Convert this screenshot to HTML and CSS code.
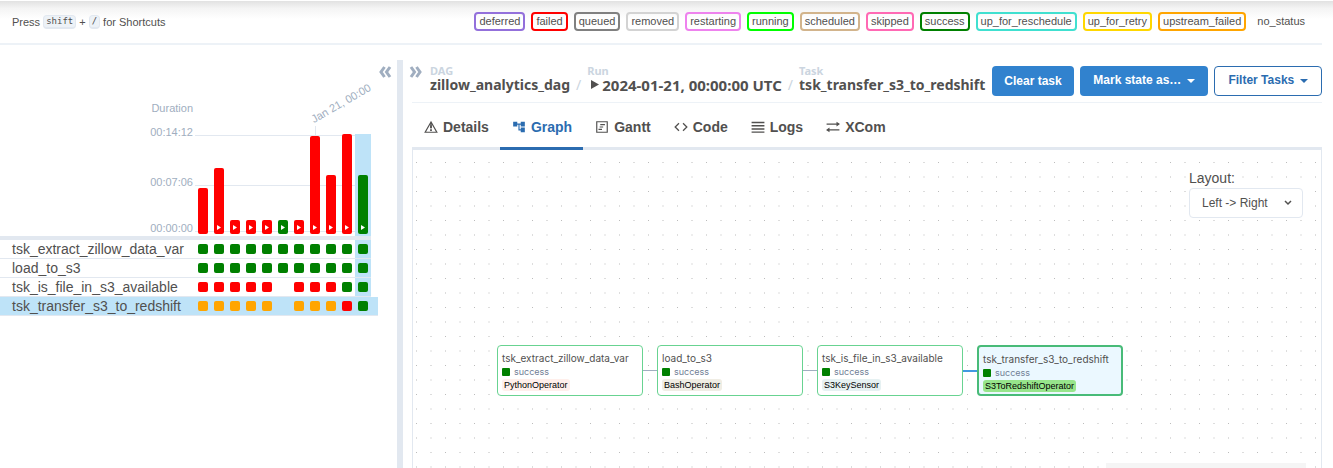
FILE: index.html
```
<!DOCTYPE html>
<html lang="en">
<head>
<meta charset="utf-8">
<title>zillow_analytics_dag</title>
<link rel="stylesheet" href="styles.css">
</head>
<body>
<header class="topbar">
  <p class="shortcuts">Press <kbd>shift</kbd> + <kbd>/</kbd> for Shortcuts</p>
  <ul class="legend">
    <li class="deferred">deferred</li><li class="failed">failed</li><li class="queued">queued</li><li class="removed">removed</li><li class="restarting">restarting</li><li class="running">running</li><li class="scheduled">scheduled</li><li class="skipped">skipped</li><li class="success">success</li><li class="reschedule">up_for_reschedule</li><li class="retry">up_for_retry</li><li class="upstream">upstream_failed</li><li class="none">no_status</li>
  </ul>
</header>
<main class="main">
  <section class="grid-panel">
    <div class="grid-top">
      <button class="collapse" aria-label="Hide grid"><svg width="14" height="14" viewBox="0 0 14 14"><path d="M6.500 2L3 7L6.500 12M12 2L8.500 7L12 12"/></svg></button>
    </div>
    <div class="chart">
      <div class="axis"><span>Duration</span><span>00:14:12</span><span>00:07:06</span><span>00:00:00</span></div>
      <div class="plot">
        <i class="line line-top"></i><i class="line line-mid"></i><i class="line line-low"></i><i class="tick"></i><span class="date">Jan 21, 00:00</span>
        <div class="bars" id="bars"></div>
      </div>
    </div>
    <div class="tasks" id="tasks"></div>
  </section>
  <div class="divider"></div>
  <section class="detail">
    <div class="crumb-row">
      <button class="expand" aria-label="Hide details"><svg width="14" height="14" viewBox="0 0 14 14"><path d="M2 2L5.500 7L2 12M7.500 2L11 7L7.500 12"/></svg></button>
      <nav class="crumbs">
        <a href="#dag"><small>DAG</small><b>zillow_analytics_dag</b></a>
        <i>/</i>
        <a href="#run"><small>Run</small><b class="run"><svg width="8" height="10" viewBox="0 0 8 10"><path d="M0 0L8 4.500L0 9Z"/></svg>2024-01-21, 00:00:00 UTC</b></a>
        <i>/</i>
        <a href="#task"><small>Task</small><b>tsk_transfer_s3_to_redshift</b></a>
      </nav>
      <div class="actions">
        <button class="btn clear">Clear task</button>
        <button class="btn mark">Mark state as… <span class="caret"></span></button>
        <button class="btn filter">Filter Tasks <span class="caret"></span></button>
      </div>
    </div>
    <div class="tabs" role="tablist">
      <button role="tab"><svg viewBox="0 0 24 24"><path fill="none" stroke="currentColor" stroke-width="2" d="M12 3.500L2 21H22ZM12 3v11"/><path d="M10.500 9h3v5h-3zM10.500 16h3v3h-3z"/></svg>Details</button>
      <button role="tab" aria-selected="true" class="active"><svg viewBox="0 0 24 24"><path d="M22 11V3h-7v3H9V3H2v8h7V8h2v10h4v3h7v-8h-7v3h-2V8h2v3z"/></svg>Graph</button>
      <button role="tab"><svg viewBox="0 0 24 24"><path fill="none" stroke="currentColor" stroke-width="2" d="M3 3h18v18H3zM9 8h8M8 12h6M6 16h6"/></svg>Gantt</button>
      <button role="tab"><svg viewBox="0 0 24 24"><path fill="none" stroke="currentColor" stroke-width="2.200" d="M8.500 5.500L2 12l6.500 6.500M15.500 5.500L22 12l-6.500 6.500"/></svg>Code</button>
      <button role="tab"><svg viewBox="0 0 24 24"><path d="M1 3h22v2.500H1zM1 8.500h22V11H1zM1 14h22v2.500H1zM1 19.500h22V22H1z"/></svg>Logs</button>
      <button role="tab"><svg viewBox="0 0 24 24"><path fill="none" stroke="currentColor" stroke-width="2" d="M1 7h20M3 17h20"/><path d="M18 3l6 4-6 4zM6 13l-6 4 6 4z"/></svg>XCom</button>
    </div>
    <div class="canvas">
      <svg class="dots" width="100%" height="100%" aria-hidden="true">
        <defs><pattern id="dots" width="29" height="29" patternUnits="userSpaceOnUse"><path d="M3 12h1v1H3zM17.500 12h1v1h-1zM3 26.500h1v1H3zM17.500 26.500h1v1h-1z"/></pattern></defs>
        <rect width="100%" height="100%" fill="url(#dots)"/>
      </svg>
      <div class="layout"><label for="layout">Layout:</label>
        <div class="select-wrap"><select id="layout"><option>Left -&gt; Right</option></select><svg width="8" height="6" viewBox="0 0 8 6"><path d="M1 1l3 3 3-3"/></svg></div>
      </div>
      <i class="edge e1"></i><i class="edge e2"></i><i class="edge e3"></i>
      <article class="node n1"><h3>tsk_extract_zillow_data_var</h3><p>success</p><span>PythonOperator</span></article>
      <article class="node n2"><h3>load_to_s3</h3><p>success</p><span>BashOperator</span></article>
      <article class="node n3"><h3>tsk_is_file_in_s3_available</h3><p>success</p><span>S3KeySensor</span></article>
      <article class="node n4"><h3>tsk_transfer_s3_to_redshift</h3><p>success</p><span>S3ToRedshiftOperator</span></article>
      <div class="minimap"></div>
    </div>
  </section>
</main>
<script src="app.js"></script>
</body>
</html>
```
FILE: styles.css
```
* { box-sizing: border-box; }
body { margin: 0; height: 100vh; overflow: hidden; display: flex; flex-direction: column; background: #fff; color: #51504f; font-family: "Liberation Sans", Arial, sans-serif; font-size: 14px; }
button { border: 0; padding: 0; background: none; color: inherit; font: inherit; cursor: pointer; }
.topbar { display: flex; justify-content: space-between; align-items: center; height: 45px; flex: none; margin-right: 11px; padding: 0 12px; border-bottom: 2px solid #edf2f7; }
.topbar::before { content: ""; position: absolute; z-index: -1; top: 1px; left: 0; right: 0; height: 18px; background: linear-gradient(#e2e2e2, #f4f4f4 40%, #fff); }
.shortcuts { margin: 0; font-size: 11px; line-height: 16px; display: flex; align-items: center; gap: 3px; }
kbd { font-family: "DejaVu Sans Mono", monospace; font-size: 9px; line-height: 10px; padding: 0 2px 1px; border: 1px solid #e2e8f0; border-bottom-width: 2px; border-radius: 4px; background: #edf2f7; }
.legend { list-style: none; display: flex; gap: 6px; margin: 0; padding: 0; font-size: 11px; line-height: 15px; }
.legend li { border: 2px solid var(--c); border-radius: 4px; padding: 0 3px; }
.deferred { --c: mediumpurple; } .failed { --c: red; } .queued { --c: gray; } .removed { --c: lightgrey; }
.restarting { --c: violet; } .running { --c: lime; } .scheduled { --c: tan; } .skipped { --c: hotpink; }
.success { --c: green; } .reschedule { --c: turquoise; } .retry { --c: gold; } .upstream { --c: orange; } .none { --c: transparent; }
.main { flex: 1; display: flex; min-height: 0; padding: 15px 11px 0 0; }
.grid-panel { flex: none; width: 397px; }
.grid-top { display: flex; justify-content: flex-end; padding: 5px 5px 0 0; height: 42px; }
.collapse, .expand { display: flex; height: 14px; }
.collapse svg, .expand svg { fill: none; stroke: #a0aec0; stroke-width: 3; }
.chart { display: flex; width: 371px; height: 138px; border-bottom: 4px solid #e2e8f0; color: #a0aec0; font-size: 11px; }
.axis { width: 195px; padding-right: 2px; display: grid; grid-template-rows: 24px 50px 46px 12px; line-height: 12px; text-align: right; }
.plot { position: relative; flex: 1; display: flex; align-items: flex-end; }
.line { position: absolute; left: 0; right: 0; height: 1px; background: #e2e8f0; }
.line-top { top: 33px; } .line-mid { top: 83px; } .line-low { top: 129px; }
.tick { position: absolute; left: 120px; top: 24px; width: 1px; height: 10px; background: #e2e8f0; }
.date { position: absolute; left: 120px; top: 11px; line-height: 12px; white-space: nowrap; transform: rotate(-30deg); transform-origin: left bottom; }
.bars { position: relative; display: flex; height: 102px; }
.col { flex: none; width: 16px; padding: 0 3px 2px; display: flex; align-items: flex-end; }
.col:last-child, .cell:last-child { background: #bee3f8; }
.bar { width: 10px; border-radius: 2px; background: var(--c); display: flex; align-items: flex-end; justify-content: center; padding-bottom: 4px; }
.bar svg { fill: #fff; }
.task { display: flex; width: 371px; height: 19px; border-bottom: 1px solid #e2e8f0; }
.task > a { width: 195px; padding-left: 12px; color: inherit; text-decoration: none; line-height: 18px; white-space: nowrap; }
.task.selected { width: 378px; background: #bee3f8; }
.cell { width: 16px; padding: 4px 3px; }
.cell i { display: block; width: 10px; height: 10px; border-radius: 2px; background: var(--c); }
.divider { width: 6px; flex: none; background: #e2e8f0; }
.detail { flex: 1; min-width: 0; padding-left: 9px; display: flex; flex-direction: column; }
.crumb-row { display: flex; height: 43px; flex: none; border-bottom: 1px solid #edf2f7; }
.expand { margin: 5px 7px 0 -3px; }
.crumbs { display: flex; gap: 6px; padding-top: 4px; font-family: "Noto Sans", "Open Sans", sans-serif; white-space: nowrap; }
.crumbs a { display: block; color: inherit; text-decoration: none; }
.crumbs small { display: block; font-size: 11px; line-height: 13px; font-weight: 700; color: #cbd5e0; }
.crumbs b { display: block; font-size: 14px; line-height: 16px; }
.crumbs .run { font-size: 15px; }
.crumbs i { padding-top: 13px; line-height: 16px; font-style: normal; color: #cbd5e0; }
.crumbs svg { margin: 0 3px 0 4px; fill: currentColor; vertical-align: 1px; }
.actions { display: flex; gap: 6px; margin-left: auto; padding-top: 6px; }
.btn { height: 30px; border-radius: 4px; padding: 0 12px 2px; background: #3182ce; color: #fff; font-size: 12px; font-weight: 700; white-space: nowrap; }
.btn.clear { width: 82px; padding-bottom: 0; }
.btn.mark { width: 128px; }
.btn.filter { width: 108px; border: 1px solid #2b6cb0; background: #fff; color: #2b6cb0; }
.caret { display: inline-block; border: 4px solid transparent; border-top-color: currentColor; border-bottom: 0; margin-left: 2px; vertical-align: middle; }
.tabs { display: flex; flex: none; height: 47px; padding-top: 4px; border-bottom: 3px solid #e2e8f0; }
.tabs button { display: flex; align-items: center; gap: 5px; padding: 0 11px 1px 12px; font-weight: 700; margin-bottom: -3px; border-bottom: 3px solid transparent; }
.tabs svg { width: 14px; height: 14px; fill: currentColor; }
.tabs .active { color: #2b6cb0; border-bottom-color: #2b6cb0; }
.canvas { position: relative; flex: 1; border: 1px solid #e2e8f0; border-width: 0 1px; overflow: hidden; }
.dots { position: absolute; inset: 0; fill: #bcbcbc; }
.layout { position: absolute; right: 18px; top: 19px; width: 114px; }
.layout label { display: block; line-height: 19px; }
.select-wrap { position: relative; }
.select-wrap select { appearance: none; width: 100%; height: 30px; padding: 0 12px; border: 1px solid #e2e8f0; border-radius: 4px; background: #fff; color: inherit; font: 12px "Liberation Sans", Arial, sans-serif; }
.select-wrap svg { position: absolute; right: 11px; top: 12px; fill: none; stroke: #51504f; stroke-width: 1.5; }
.node { position: absolute; top: 195px; width: 146px; height: 51px; padding: 6px 4px; border: 1px solid #68d391; border-radius: 4px; background: #fff; font-family: Inter, sans-serif; font-size: 9px; }
.node h3 { margin: 0; font-size: 10px; line-height: 12px; font-weight: 400; white-space: nowrap; }
.n1 { left: 84px; } .n2 { left: 244px; } .n3 { left: 404px; }
.n4 { left: 564px; border: 2px solid #48bb78; background: #ebf8ff; }
.node p { display: flex; align-items: center; gap: 4px; margin: 1px 0; line-height: 13px; color: #718096; }
.node p::before { content: ""; width: 8px; height: 8px; border-radius: 1px; background: green; }
.node span { display: block; width: max-content; padding: 0 2px; border-radius: 3px; font-family: "Liberation Sans", Arial, sans-serif; line-height: 12px; color: #000; background: #ffefeb; }
.n2 span { background: #f0ede4; } .n3 span { background: #e6f1f2; } .n4 span { background: #97e58b; }
.edge { position: absolute; top: 220px; width: 14px; height: 1px; background: #a0aec0; }
.e1 { left: 230px; } .e2 { left: 390px; } .e3 { left: 550px; height: 2px; background: #4299e1; }
.minimap { position: absolute; right: 15px; top: 313px; width: 200px; height: 150px; background: #f5f5f5; }
```
FILE: app.js
```
const states = { r: "red", g: "green", o: "orange" };
const runs = [[46, "r"], [66, "r"], [14, "r"], [14, "r"], [14, "r"], [14, "g"], [14, "r"], [98, "r"], [59, "r"], [100, "r"], [59, "g"]];
const play = '<svg width="4" height="5" viewBox="0 0 4 5"><path d="M0 0L4 2.500L0 5Z"/></svg>';
document.getElementById("bars").innerHTML = runs.map(([h, s], i) =>
  `<div class="col"><div class="bar" style="height:${h}px;--c:${states[s]}">${i ? play : ""}</div></div>`).join("");
const tasks = [
  ["tsk_extract_zillow_data_var", "ggggggggggg"],
  ["load_to_s3", "ggggggggggg"],
  ["tsk_is_file_in_s3_available", "rrrrr rrrgg"],
  ["tsk_transfer_s3_to_redshift", "ooooo ooorg"]
];
document.getElementById("tasks").innerHTML = tasks.map(([name, cells], i) =>
  `<div class="task${i === 3 ? " selected" : ""}"><a href="#${name}">${name}</a>${[...cells].map(s =>
    `<div class="cell"><i style="--c:${states[s] || "transparent"}"></i></div>`).join("")}</div>`).join("");
// The selected run's column stays lit from the chart down through every task row.
document.querySelectorAll(".bars .col:last-child").forEach(col => { col.style.height = "100%"; });
```
